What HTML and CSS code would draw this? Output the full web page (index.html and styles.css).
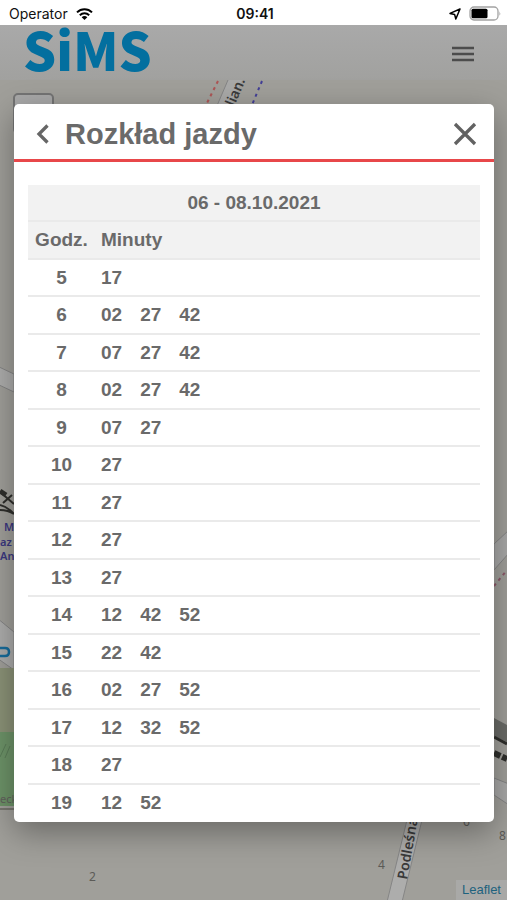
FILE: index.html
```html
<!DOCTYPE html>
<html lang="pl">
<head>
<meta charset="utf-8">
<meta name="viewport" content="width=device-width, initial-scale=1">
<title>SiMS – Rozkład jazdy</title>
<link rel="stylesheet" href="styles.css">
</head>
<body>
<div class="status">
  <div class="status-left">
    <span>Operator</span>
    <svg width="17" height="12" viewBox="0 0 17 12" aria-hidden="true">
      <g fill="none" stroke="#000" stroke-width="2">
        <path d="M1 4.4C5.2.2 11.8.2 16 4.4"/>
        <path d="M3.8 7.2C6.5 4.7 10.5 4.7 13.2 7.2"/>
      </g>
      <path d="M8.500 12L5.700 9.200C7.200 7.700 9.800 7.700 11.300 9.200Z"/>
    </svg>
  </div>
  <time class="clock">09:41</time>
  <div class="status-right">
    <svg width="12" height="12" viewBox="0 0 12 12" aria-hidden="true">
      <path d="M11 1L1 5.400L5.600 6.400L6.800 11Z" fill="none" stroke="#000" stroke-width="1.500" stroke-linejoin="round"/>
    </svg>
    <svg width="32" height="15" viewBox="0 0 32 15" aria-hidden="true">
      <rect x="1" y="1" width="28" height="13" rx="4" fill="none" stroke="#a3a3a3" stroke-width="1.300"/>
      <rect x="2.500" y="2.700" width="16" height="9.600" rx="1.500"/>
      <path d="M30.500 5.200Q32 7.500 30.500 9.800Z" fill="#999"/>
    </svg>
  </div>
</div>
<main class="screen">
  <svg class="map" viewBox="0 25 507 875" preserveAspectRatio="xMidYMid slice" aria-hidden="true">
    <g stroke="#858585" stroke-width="1">
      <path d="M-3 366L14 374V392L-3 384Z" fill="#adadac"/>
      <path d="M-3 618L14 632V670L-3 658Z" fill="#adadac"/>
      <path d="M494 544L509 530V553L494 570Z" fill="#a9a9a8"/>
      <path d="M494 778L509 784V805L494 795Z" fill="#a9a9a8"/>
      <path d="M407 820H422L402 902H387Z" fill="#adadac"/>
      <path d="M228 80H242L230 108H216Z" fill="#a9a9a8" stroke="none"/>
      <path d="M228 80L216 108"/>
    </g>
    <rect y="668" width="14" height="64" fill="#8b9277"/>
    <path d="M0 732H14V806H0Z" fill="#6d9368"/>
    <path d="M0 757L6 744M5 758L10 746" stroke="#5b7d58" fill="none"/>
    <path d="M0 809H14" stroke="#77766f" stroke-width="2"/>
    <path d="M494 718L507 725V742L494 736Z" fill="#6a6b67"/>
    <g fill="none" stroke="#2f2f2c">
      <path d="M0 492L14 504M3 503L12 495" stroke-width="2"/>
      <path d="M0 491L6 495" stroke-width="5"/>
      <path d="M0 505Q8 507 14 514M0 510Q8 510 14 514" stroke-width="2"/>
      <path d="M494 737L507 744" stroke-width="3"/>
      <path d="M494 753L507 759" stroke-width="6" stroke-dasharray="7 2"/>
    </g>
    <g fill="none" stroke-width="2" stroke-dasharray="3 4">
      <path d="M218 81L206 105" stroke="#ad5555"/>
      <path d="M262 81L252 105" stroke="#433f96"/>
      <path d="M494 586L507 570" stroke="#8c5868"/>
    </g>
    <rect x="14" y="94" width="39" height="39" rx="4" fill="#a8a8a8" stroke="#747474" stroke-width="2"/>
    <g class="map-text">
      <text class="street" transform="translate(229 119) rotate(-67)">Kilian.</text>
      <text class="street" transform="translate(407 880) rotate(-80)">Podleśna</text>
      <text class="station" x="4" y="531">M</text>
      <text class="station" x="0" y="546">az</text>
      <text class="station" x="0" y="560">An</text>
      <text class="area" x="0" y="803">eck</text>
      <text class="number" x="89" y="881">2</text>
      <text class="number" x="378" y="869">4</text>
      <text class="number" x="463" y="826">6</text>
      <text class="number" x="499" y="840">8</text>
    </g>
    <path d="M0 648H5Q9 648 9 652T5 656H0" fill="none" stroke="#176c9b" stroke-width="2.500"/>
  </svg>

  <header class="app-bar">
    <a class="logo" href="#">SiMS</a>
    <button class="menu" type="button" aria-label="Menu">
      <svg width="22" height="16" viewBox="0 0 22 16"><path d="M0 2H22M0 8H22M0 14H22" stroke="#4c4c4c" stroke-width="2.400"/></svg>
    </button>
  </header>

  <section class="dialog" role="dialog" aria-labelledby="dialog-title">
    <div class="dialog-head">
      <button class="back" type="button" aria-label="Wstecz">
        <svg width="14" height="20" viewBox="0 0 14 20"><path d="M11.500 1.500L3 10L11.500 18.500" fill="none" stroke="#666" stroke-width="3.300"/></svg>
      </button>
      <h1 id="dialog-title">Rozkład jazdy</h1>
      <button class="close" type="button" aria-label="Zamknij">
        <svg width="24" height="24" viewBox="0 0 24 24"><path d="M2 2L22 22M22 2L2 22" stroke="#626262" stroke-width="3.300"/></svg>
      </button>
    </div>
    <div class="dialog-body">
      <table class="timetable">
        <thead>
          <tr><th class="date" colspan="2">06 - 08.10.2021</th></tr>
          <tr><th class="hour" scope="col">Godz.</th><th scope="col">Minuty</th></tr>
        </thead>
        <tbody>
          <tr><th class="hour" scope="row">5</th><td><span>17</span></td></tr>
          <tr><th class="hour" scope="row">6</th><td><span>02</span><span>27</span><span>42</span></td></tr>
          <tr><th class="hour" scope="row">7</th><td><span>07</span><span>27</span><span>42</span></td></tr>
          <tr><th class="hour" scope="row">8</th><td><span>02</span><span>27</span><span>42</span></td></tr>
          <tr><th class="hour" scope="row">9</th><td><span>07</span><span>27</span></td></tr>
          <tr><th class="hour" scope="row">10</th><td><span>27</span></td></tr>
          <tr><th class="hour" scope="row">11</th><td><span>27</span></td></tr>
          <tr><th class="hour" scope="row">12</th><td><span>27</span></td></tr>
          <tr><th class="hour" scope="row">13</th><td><span>27</span></td></tr>
          <tr><th class="hour" scope="row">14</th><td><span>12</span><span>42</span><span>52</span></td></tr>
          <tr><th class="hour" scope="row">15</th><td><span>22</span><span>42</span></td></tr>
          <tr><th class="hour" scope="row">16</th><td><span>02</span><span>27</span><span>52</span></td></tr>
          <tr><th class="hour" scope="row">17</th><td><span>12</span><span>32</span><span>52</span></td></tr>
          <tr><th class="hour" scope="row">18</th><td><span>27</span></td></tr>
          <tr><th class="hour" scope="row">19</th><td><span>12</span><span>52</span></td></tr>
        </tbody>
      </table>
    </div>
  </section>
  <a class="credit" href="#">Leaflet</a>
</main>
</body>
</html>
```
FILE: styles.css
```css
* { box-sizing: border-box; }

body {
  margin: 0;
  min-height: 100vh;
  display: flex;
  flex-direction: column;
  font-family: "Liberation Sans", Arial, sans-serif;
  color: #6a6a6a;
  background: #a09f9a;
}

button {
  display: flex;
  padding: 0;
  border: 0;
  background: none;
}

.status {
  display: grid;
  grid-template-columns: 1fr auto 1fr;
  align-items: center;
  height: 25px;
  padding: 2px 6px 0 9px;
  background: #fff;
  color: #111;
  font: 14px/20px Inter, sans-serif;
}

.status-left,
.status-right {
  display: flex;
  align-items: center;
  gap: 8px;
}

.status-right { justify-content: flex-end; }

.clock { font-weight: 600; }

.screen {
  position: relative;
  flex: 1;
  overflow: hidden;
}

.map {
  position: absolute;
  inset: 0;
  width: 100%;
  height: 100%;
}

.map-text { font-family: "Noto Sans", sans-serif; }
.street { font-size: 14px; font-weight: 600; fill: #3a3a3a; }
.station { font-size: 11px; font-weight: 600; fill: #3b3880; }
.area { font-size: 11px; fill: #62615d; }
.number { font-size: 12px; fill: #5c5b57; }

.app-bar {
  position: relative;
  display: flex;
  align-items: center;
  justify-content: space-between;
  height: 55px;
  padding: 2px 33px 0 23px;
  background: linear-gradient(#a9a9a9, #a1a19f);
}

.logo {
  margin-bottom: 10px;
  color: #036f9f;
  font: 900 52px/44px "Noto Sans CJK SC", sans-serif;
  text-decoration: none;
}

.dialog {
  position: relative;
  margin: 24px 13px 0 14px;
  overflow: hidden;
  border-radius: 5px;
  background: #fff;
  box-shadow: 0 10px 32px rgba(0, 0, 0, 0.35);
}

.dialog-head {
  display: flex;
  align-items: center;
  height: 58px;
  padding: 4px 17px 0 22px;
  border-bottom: 3px solid #e8474a;
}

.dialog-head h1 {
  flex: 1;
  margin: 0 0 0 15px;
  font-size: 29px;
  line-height: 32px;
}

.dialog-body { padding: 23px 14px 0; }

.timetable {
  width: 100%;
  border-collapse: separate;
  border-spacing: 0;
  font-size: 19px;
  font-weight: bold;
  line-height: 22px;
}

.timetable tr { height: 37px; }
.timetable tr:nth-child(even) { height: 38px; }

.timetable th,
.timetable td {
  padding: 0 6px;
  border-bottom: 2px solid #eaeaea;
  text-align: left;
}

.timetable thead { background: #f2f2f2; }

.timetable .date { text-align: center; }

.timetable .hour {
  width: 67px;
  text-align: center;
}

.timetable tbody tr:last-child > * { border-bottom-color: transparent; }

.timetable span { margin-right: 18px; }

.credit {
  position: absolute;
  right: 0;
  bottom: 0;
  padding: 0 6px;
  background: #a9a9a7;
  color: #1d627e;
  font-size: 13px;
  line-height: 20px;
  text-decoration: none;
}
```
